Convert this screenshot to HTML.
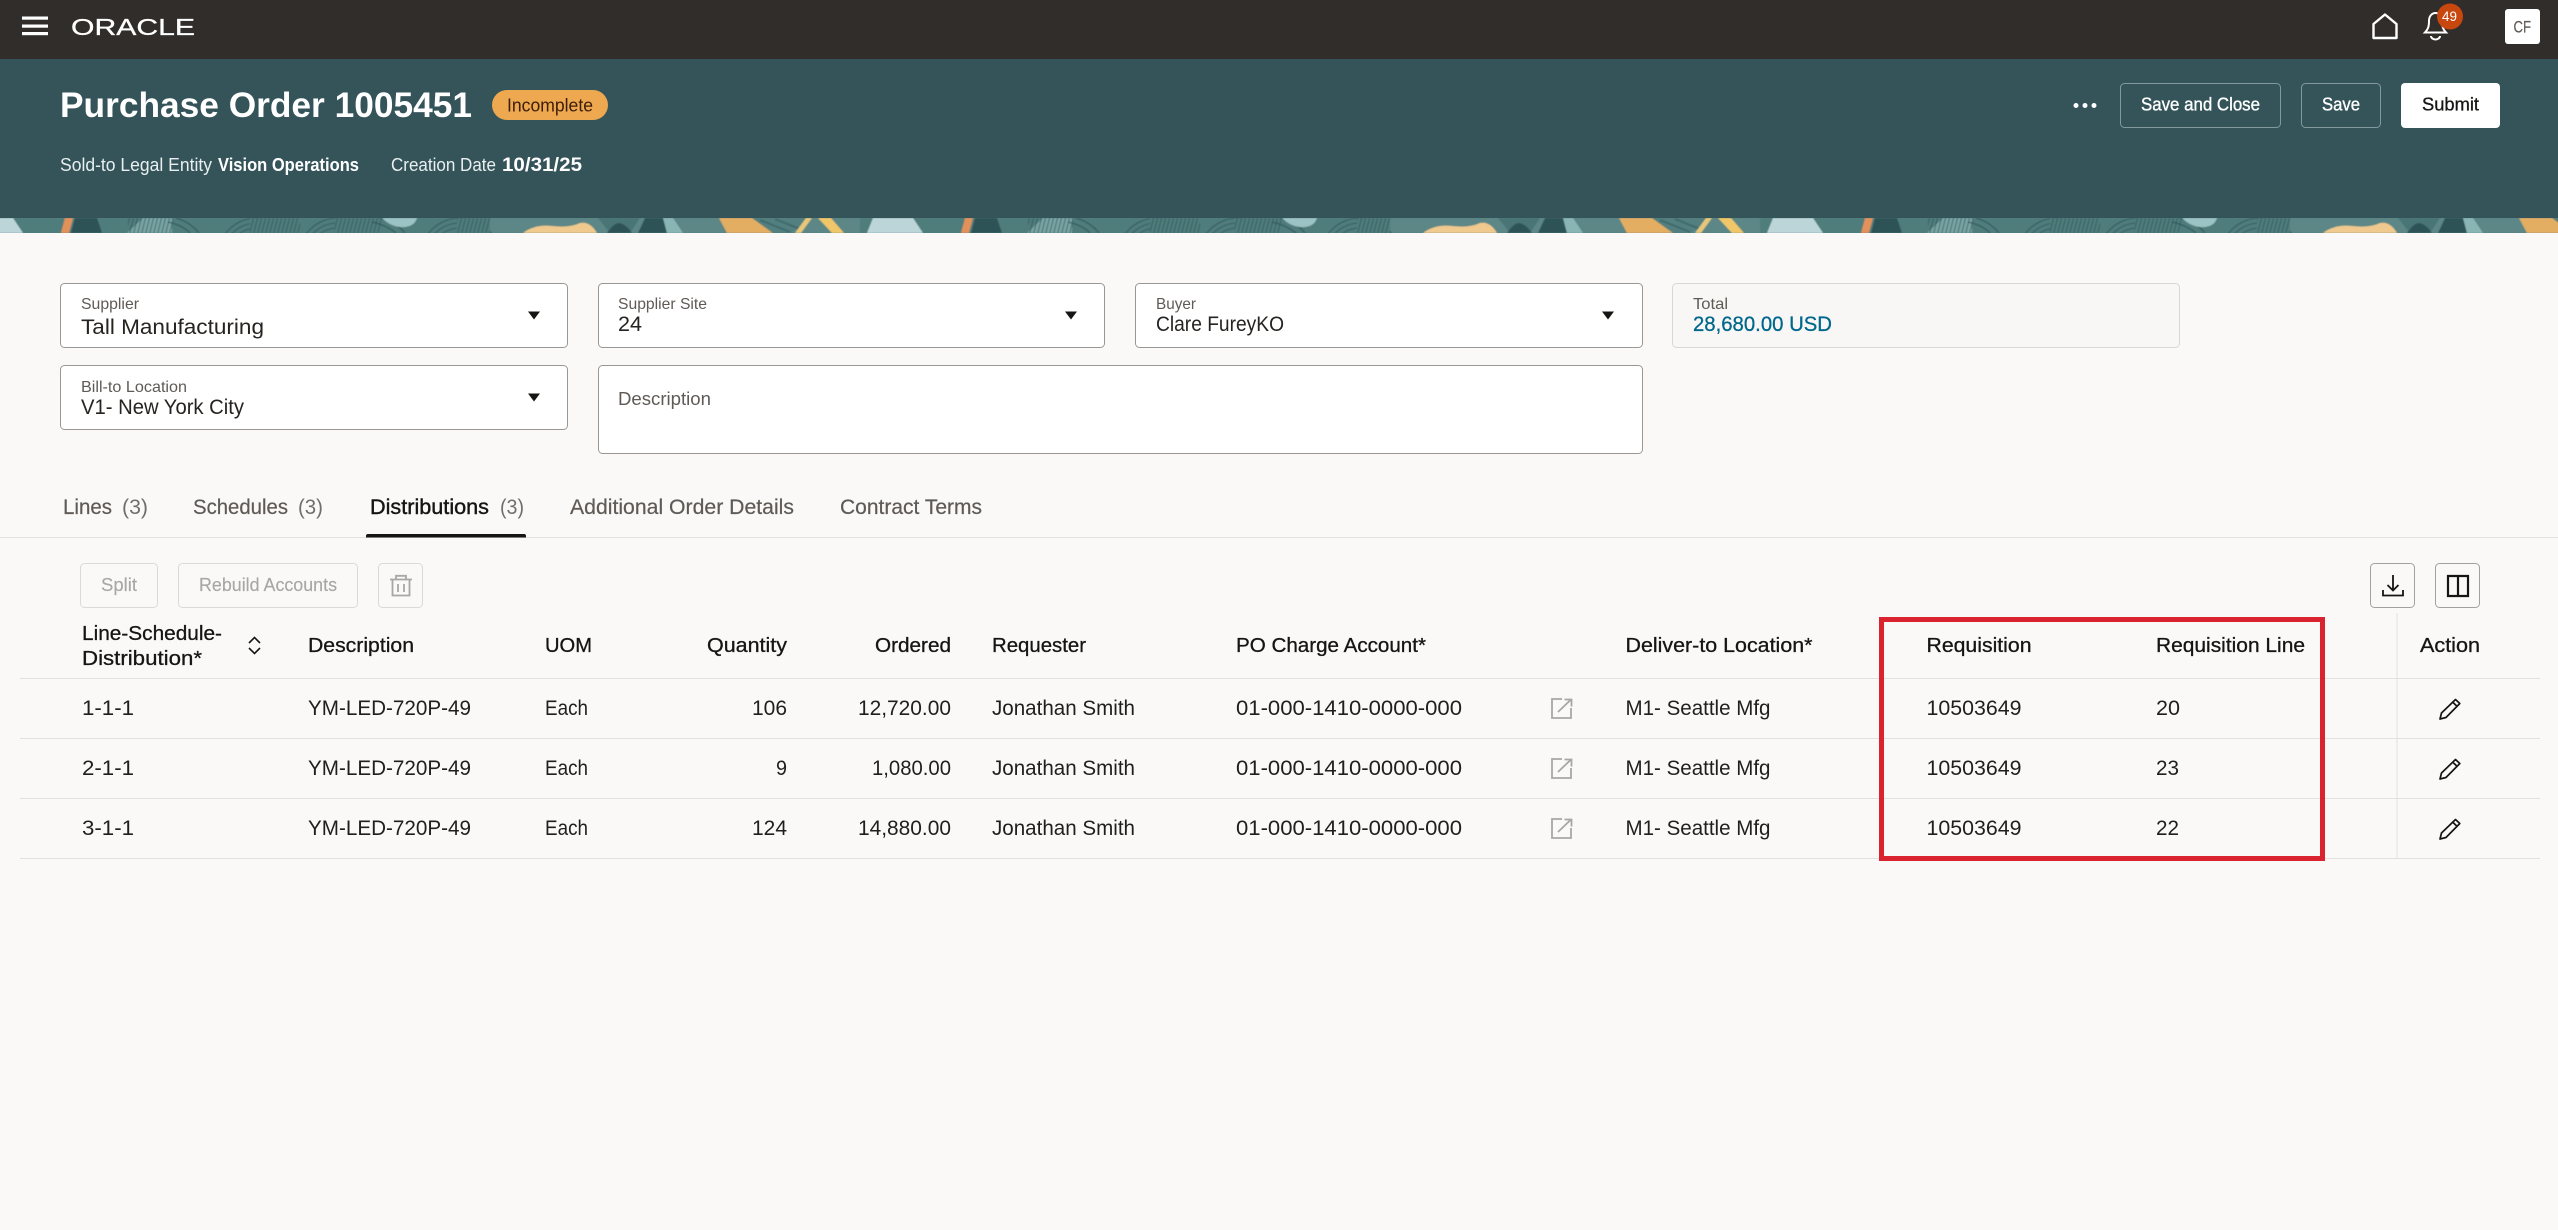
<!DOCTYPE html>
<html lang="en">
<head>
<meta charset="utf-8">
<title>Purchase Order 1005451</title>
<style>
html,body{margin:0;padding:0;background:#fbf9f8;width:2558px;height:1230px;overflow:hidden}
svg{display:block;font-family:"Liberation Sans",sans-serif}
text{white-space:pre}
.l{font-size:16px;fill:#5f5a56}
.v{font-size:21.5px;fill:#262320}
.t{font-size:21px;fill:#5f5a56;stroke:#5f5a56;stroke-width:.2}
.ta{font-size:21px;fill:#161513;stroke:#161513;stroke-width:.4}
.c{font-size:21px;fill:#726d69}
.h{font-size:20.5px;fill:#161513;stroke:#161513;stroke-width:.3}
.r{font-size:21px;fill:#211e1c}
.s{font-size:18.5px;fill:#e9efef}
.sb{font-size:18.5px;font-weight:bold;fill:#fff}
.sd{font-size:19.5px;font-weight:bold;fill:#fff}
.b{font-size:18.5px;fill:#fff;stroke:#fff;stroke-width:.35}
.d{font-size:18px;fill:#a9a6a3;stroke:#a9a6a3;stroke-width:.15}
.f{fill:#fff;stroke:#9a9693;stroke-width:1}
.div{stroke:#e3e1de;stroke-width:1}
.ic{fill:none;stroke:#a9a6a3;stroke-width:1.800}
.pk{fill:none;stroke:#161513;stroke-width:1.700;stroke-linejoin:round}
</style>
</head>
<body>
<svg xmlns="http://www.w3.org/2000/svg" width="2558" height="1230" viewBox="0 0 2558 1230">
<defs>
<filter id="soft" filterUnits="userSpaceOnUse" x="-10" y="210" width="2580" height="30"><feGaussianBlur stdDeviation=".4"/></filter>
<pattern id="hat" width="4" height="15" patternUnits="userSpaceOnUse" patternTransform="translate(0 218) skewX(-14)">
<line x1="1.500" y1="0" x2="1.500" y2="15" stroke="#2f5257" stroke-width="1" stroke-opacity=".75"/>
</pattern>
<clipPath id="bc"><rect x="0" y="218" width="2558" height="15"/></clipPath>
<g id="tile">
<rect x="490" y="218" width="370" height="15" fill="#5b8786"/>
<path d="M143 218H172V233H127Z" fill="#7aa5a4"/>
<rect x="128" y="218" width="45" height="15" fill="url(#hat)"/>
<path d="M176 218Q190 222 199 233M168 222Q182 225 190 233" fill="none" stroke="#2f5257" stroke-width="1.300" stroke-opacity=".8"/>
<g fill="none" stroke="#2f5257" stroke-width="1.100" stroke-opacity=".75">
<circle cx="257" cy="258" r="30"/><circle cx="257" cy="258" r="35"/><circle cx="257" cy="258" r="40"/>
<circle cx="338" cy="258" r="30"/><circle cx="338" cy="258" r="35"/><circle cx="338" cy="258" r="40"/>
<circle cx="460" cy="258" r="30"/><circle cx="460" cy="258" r="35"/><circle cx="460" cy="258" r="40"/>
</g>
<rect x="250" y="218" width="50" height="15" fill="#4f7d7c"/>
<rect x="250" y="218" width="50" height="15" fill="url(#hat)"/>
<rect x="335" y="218" width="46" height="15" fill="#4f7d7c"/>
<rect x="335" y="218" width="46" height="15" fill="url(#hat)"/>
<rect x="457" y="218" width="33" height="15" fill="#4f7d7c"/>
<rect x="457" y="218" width="33" height="15" fill="url(#hat)"/>
<path d="M380 218Q396 222 405 233M372 222Q386 225 396 233" fill="none" stroke="#2f5257" stroke-width="1.300" stroke-opacity=".8"/>
<path d="M382 218H417Q414 228 400 227Q390 226 382 218Z" fill="#9cc3c3"/>
<path d="M523 233Q535 224 552 226Q570 228 580 223Q590 221 597 233Z" fill="#f0c98e"/>
<path d="M598 218H640L630 233H610Z" fill="#4a7576"/>
<path d="M607 233Q614 223 619 223Q626 224 632 233Z" fill="#2f5257"/>
<path d="M645 218H663L667 233H638Z" fill="#2f5257"/>
<path d="M663 218H673L683 233H667Z" fill="#8ab5b5"/>
<path d="M719 218H752L773 233H727Z" fill="#e3ae62"/>
<path d="M752 218H812L790 233H773Z" fill="#527f7f"/>
<path d="M760 220L790 232M775 219L800 229" stroke="#3f6a6c" stroke-width="2" fill="none"/>
<path d="M806 218H812L801 233H795Z" fill="#e8c77a"/>
<path d="M818 218H831L844 233H832Z" fill="#efc769"/>
<path d="M873 218H913L923 233H867Z" fill="#bcd5d8"/>
<path d="M965 218H973L969 233H961Z" fill="#e2915a"/>
<path d="M975 218H997L1002 233H971Z" fill="#2f5257"/>
</g>
</defs>

<!-- top nav -->
<rect width="2558" height="59" fill="#312d2a"/>
<rect x="22" y="16.500" width="26" height="3.200" fill="#fff"/>
<rect x="22" y="24.500" width="26" height="3.200" fill="#fff"/>
<rect x="22" y="32" width="26" height="3.200" fill="#fff"/>
<text x="71" y="35" font-size="23" fill="#fff" stroke="#fff" stroke-width=".3" textLength="124" lengthAdjust="spacingAndGlyphs">ORACLE</text>

<path d="M2373.500 38V24L2385 14.500L2396.500 24V38Z" fill="none" stroke="#fff" stroke-width="2.400" stroke-linejoin="round"/>
<path d="M2425 32.500c3-3 4-6 4-11.500c0-5 3-8 6.500-8c3.500 0 6.500 3 6.500 8c0 5.500 1 8.500 4 11.500Z" fill="none" stroke="#fff" stroke-width="2"/>
<path d="M2431 36a4.500 3.500 0 0 0 9 0" fill="none" stroke="#fff" stroke-width="2"/>
<circle cx="2450" cy="16.500" r="13" fill="#c8470e"/>
<text x="2442" y="21" font-size="14" fill="#fff" textLength="15" lengthAdjust="spacingAndGlyphs">49</text>
<rect x="2505" y="9" width="35" height="35" rx="3" fill="#fff"/>
<text x="2513.500" y="32.500" font-size="16.500" fill="#5f5a56" stroke="#5f5a56" stroke-width=".2" textLength="17.500" lengthAdjust="spacingAndGlyphs">CF</text>

<!-- page header -->
<rect y="59" width="2558" height="159" fill="#34545a"/>
<text x="60" y="117" font-size="35.500" font-weight="bold" fill="#fff" textLength="412" lengthAdjust="spacingAndGlyphs">Purchase Order 1005451</text>
<rect x="492" y="90" width="116" height="30" rx="15" fill="#eda850"/>
<text x="507" y="111.500" font-size="18.500" fill="#3c1e08" textLength="86" lengthAdjust="spacingAndGlyphs">Incomplete</text>
<text class="s" x="60" y="171" textLength="152" lengthAdjust="spacingAndGlyphs">Sold-to Legal Entity</text>
<text class="sb" x="218" y="171" textLength="141" lengthAdjust="spacingAndGlyphs">Vision Operations</text>
<text class="s" x="391" y="171" textLength="105" lengthAdjust="spacingAndGlyphs">Creation Date</text>
<text class="sd" x="502" y="171" textLength="80" lengthAdjust="spacingAndGlyphs">10/31/25</text>

<circle cx="2076" cy="105.500" r="2.500" fill="#fff"/><circle cx="2085" cy="105.500" r="2.500" fill="#fff"/><circle cx="2094" cy="105.500" r="2.500" fill="#fff"/>
<rect x="2120.500" y="83.500" width="160" height="44" rx="4" fill="none" stroke="#83999c" stroke-width="1"/>
<text class="b" x="2141" y="110.500" textLength="119" lengthAdjust="spacingAndGlyphs">Save and Close</text>
<rect x="2301.500" y="83.500" width="79" height="44" rx="4" fill="none" stroke="#83999c" stroke-width="1"/>
<text class="b" x="2322" y="110.500" textLength="38" lengthAdjust="spacingAndGlyphs">Save</text>
<rect x="2401" y="83" width="99" height="45" rx="4" fill="#fff"/>
<text x="2422" y="110.500" font-size="18.500" fill="#161513" stroke="#161513" stroke-width=".3" textLength="57" lengthAdjust="spacingAndGlyphs">Submit</text>

<!-- banner -->
<g clip-path="url(#bc)">
<g filter="url(#soft)">
<rect x="-10" y="214" width="2580" height="24" fill="#4f7d7c"/>
<use href="#tile" x="-900"/>
<use href="#tile" x="0"/>
<use href="#tile" x="900"/>
<use href="#tile" x="1800"/>
<path d="M65 218H73L69 233H61Z" fill="#e2915a"/>
<path d="M75 218H97L102 233H71Z" fill="#2f5257"/>
</g>
</g>

<!-- form -->
<rect class="f" x="60.500" y="283.500" width="507" height="64" rx="4"/>
<text class="l" x="81" y="309" textLength="58" lengthAdjust="spacingAndGlyphs">Supplier</text>
<text class="v" x="81" y="334" textLength="183" lengthAdjust="spacingAndGlyphs">Tall Manufacturing</text>
<path d="M528 311.500H540L534 319.500Z" fill="#161513"/>

<rect class="f" x="598.500" y="283.500" width="506" height="64" rx="4"/>
<text class="l" x="618" y="309" textLength="89" lengthAdjust="spacingAndGlyphs">Supplier Site</text>
<text class="v" x="618" y="331" textLength="24" lengthAdjust="spacingAndGlyphs">24</text>
<path d="M1065 311.500H1077L1071 319.500Z" fill="#161513"/>

<rect class="f" x="1135.500" y="283.500" width="507" height="64" rx="4"/>
<text class="l" x="1156" y="309" textLength="40" lengthAdjust="spacingAndGlyphs">Buyer</text>
<text class="v" x="1156" y="331" textLength="128" lengthAdjust="spacingAndGlyphs">Clare FureyKO</text>
<path d="M1602 311.500H1614L1608 319.500Z" fill="#161513"/>

<rect x="1672.500" y="283.500" width="507" height="64" rx="4" fill="#f9f7f5" stroke="#d9d6d3" stroke-width="1"/>
<text class="l" x="1693" y="309" textLength="35" lengthAdjust="spacingAndGlyphs">Total</text>
<text x="1693" y="331" font-size="21" fill="#00688c" stroke="#00688c" stroke-width=".3" textLength="139" lengthAdjust="spacingAndGlyphs">28,680.00 USD</text>

<rect class="f" x="60.500" y="365.500" width="507" height="64" rx="4"/>
<text class="l" x="81" y="392" textLength="106" lengthAdjust="spacingAndGlyphs">Bill-to Location</text>
<text class="v" x="81" y="414" textLength="163" lengthAdjust="spacingAndGlyphs">V1- New York City</text>
<path d="M528 393.500H540L534 401.500Z" fill="#161513"/>

<rect class="f" x="598.500" y="365.500" width="1044" height="88" rx="4"/>
<text x="618" y="405" font-size="18" fill="#5f5a56" textLength="93" lengthAdjust="spacingAndGlyphs">Description</text>

<!-- tabs -->
<text class="t" x="63" y="514" textLength="49" lengthAdjust="spacingAndGlyphs">Lines</text>
<text class="c" x="122" y="514" textLength="26" lengthAdjust="spacingAndGlyphs">(3)</text>
<text class="t" x="193" y="514" textLength="95" lengthAdjust="spacingAndGlyphs">Schedules</text>
<text class="c" x="298" y="514" textLength="25" lengthAdjust="spacingAndGlyphs">(3)</text>
<text class="ta" x="370" y="514" textLength="119" lengthAdjust="spacingAndGlyphs">Distributions</text>
<text class="c" x="500" y="514" textLength="24" lengthAdjust="spacingAndGlyphs">(3)</text>
<text class="t" x="570" y="514" textLength="224" lengthAdjust="spacingAndGlyphs">Additional Order Details</text>
<text class="t" x="840" y="514" textLength="142" lengthAdjust="spacingAndGlyphs">Contract Terms</text>
<line class="div" x1="0" y1="537.500" x2="2558" y2="537.500"/>
<path d="M366 537.500V536Q366 534 368 534H524Q526 534 526 536V537.500Z" fill="#161513"/>

<!-- toolbar -->
<rect x="80.500" y="563.500" width="77" height="44" rx="4" fill="none" stroke="#dcd9d6" stroke-width="1"/>
<text class="d" x="101" y="591" textLength="36" lengthAdjust="spacingAndGlyphs">Split</text>
<rect x="178.500" y="563.500" width="179" height="44" rx="4" fill="none" stroke="#dcd9d6" stroke-width="1"/>
<text class="d" x="199" y="591" textLength="138" lengthAdjust="spacingAndGlyphs">Rebuild Accounts</text>
<rect x="378.500" y="563.500" width="44" height="44" rx="4" fill="none" stroke="#dcd9d6" stroke-width="1"/>
<path d="M390 579.500H412M396 579V575.800H406V579M392.500 580V595.500H409.500V580M398 584V592M404 584V592" fill="none" stroke="#a9a6a3" stroke-width="1.800"/>

<rect x="2370.500" y="563.500" width="44" height="44" rx="4" fill="none" stroke="#a3a09d" stroke-width="1"/>
<path d="M2393 575V590M2387.500 585L2393 590.500L2398.500 585M2383 590V595.500H2403V590" fill="none" stroke="#161513" stroke-width="1.800"/>
<rect x="2435.500" y="563.500" width="44" height="44" rx="4" fill="none" stroke="#a3a09d" stroke-width="1"/>
<path d="M2448 576H2468V596H2448ZM2458 576V596" fill="none" stroke="#161513" stroke-width="2.200"/>

<!-- table header -->
<text class="h" x="82" y="640" textLength="140" lengthAdjust="spacingAndGlyphs">Line-Schedule-</text>
<text class="h" x="82" y="665" textLength="120" lengthAdjust="spacingAndGlyphs">Distribution*</text>
<path d="M249 643L254.500 637.500L260 643M249 648L254.500 653.500L260 648" fill="none" stroke="#161513" stroke-width="1.600"/>
<text class="h" x="308" y="652" textLength="106" lengthAdjust="spacingAndGlyphs">Description</text>
<text class="h" x="545" y="652" textLength="47" lengthAdjust="spacingAndGlyphs">UOM</text>
<text class="h" x="707" y="652" textLength="80" lengthAdjust="spacingAndGlyphs">Quantity</text>
<text class="h" x="875" y="652" textLength="76" lengthAdjust="spacingAndGlyphs">Ordered</text>
<text class="h" x="992" y="652" textLength="94" lengthAdjust="spacingAndGlyphs">Requester</text>
<text class="h" x="1236" y="652" textLength="190" lengthAdjust="spacingAndGlyphs">PO Charge Account*</text>
<text class="h" x="1625.500" y="652" textLength="187" lengthAdjust="spacingAndGlyphs">Deliver-to Location*</text>
<text class="h" x="1926.500" y="652" textLength="105" lengthAdjust="spacingAndGlyphs">Requisition</text>
<text class="h" x="2156" y="652" textLength="149" lengthAdjust="spacingAndGlyphs">Requisition Line</text>
<text class="h" x="2420" y="652" textLength="60" lengthAdjust="spacingAndGlyphs">Action</text>

<line class="div" x1="20" y1="678.500" x2="2540" y2="678.500"/>
<line class="div" x1="20" y1="738.500" x2="2540" y2="738.500"/>
<line class="div" x1="20" y1="798.500" x2="2540" y2="798.500"/>
<line class="div" x1="20" y1="858.500" x2="2540" y2="858.500"/>
<line class="div" x1="2397" y1="613" x2="2397" y2="859" stroke-width="1.500"/>

<!-- row 1 -->
<text class="r" x="82" y="715" textLength="52" lengthAdjust="spacingAndGlyphs">1-1-1</text>
<text class="r" x="308" y="715" textLength="163" lengthAdjust="spacingAndGlyphs">YM-LED-720P-49</text>
<text class="r" x="545" y="715" textLength="43" lengthAdjust="spacingAndGlyphs">Each</text>
<text class="r" x="752" y="715" textLength="35" lengthAdjust="spacingAndGlyphs">106</text>
<text class="r" x="858" y="715" textLength="93" lengthAdjust="spacingAndGlyphs">12,720.00</text>
<text class="r" x="992" y="715" textLength="143" lengthAdjust="spacingAndGlyphs">Jonathan Smith</text>
<text class="r" x="1236" y="715" textLength="226" lengthAdjust="spacingAndGlyphs">01-000-1410-0000-000</text>
<path class="ic" d="M1562 699H1552V718H1571V708M1558 712L1571 699.500M1564.500 699.500H1571.500V706.500"/>
<text class="r" x="1625.500" y="715" textLength="145" lengthAdjust="spacingAndGlyphs">M1- Seattle Mfg</text>
<text class="r" x="1926.500" y="715" textLength="95" lengthAdjust="spacingAndGlyphs">10503649</text>
<text class="r" x="2156" y="715" textLength="24" lengthAdjust="spacingAndGlyphs">20</text>
<path class="pk" d="M2440 719L2441.500 713L2455.500 699.500L2459.800 703.500L2446 717.500ZM2452.800 702.200L2457 706.200"/>

<!-- row 2 -->
<text class="r" x="82" y="775" textLength="52" lengthAdjust="spacingAndGlyphs">2-1-1</text>
<text class="r" x="308" y="775" textLength="163" lengthAdjust="spacingAndGlyphs">YM-LED-720P-49</text>
<text class="r" x="545" y="775" textLength="43" lengthAdjust="spacingAndGlyphs">Each</text>
<text class="r" x="776" y="775" textLength="11" lengthAdjust="spacingAndGlyphs">9</text>
<text class="r" x="872" y="775" textLength="79" lengthAdjust="spacingAndGlyphs">1,080.00</text>
<text class="r" x="992" y="775" textLength="143" lengthAdjust="spacingAndGlyphs">Jonathan Smith</text>
<text class="r" x="1236" y="775" textLength="226" lengthAdjust="spacingAndGlyphs">01-000-1410-0000-000</text>
<path class="ic" d="M1562 759H1552V778H1571V768M1558 772L1571 759.500M1564.500 759.500H1571.500V766.500"/>
<text class="r" x="1625.500" y="775" textLength="145" lengthAdjust="spacingAndGlyphs">M1- Seattle Mfg</text>
<text class="r" x="1926.500" y="775" textLength="95" lengthAdjust="spacingAndGlyphs">10503649</text>
<text class="r" x="2156" y="775" textLength="23" lengthAdjust="spacingAndGlyphs">23</text>
<path class="pk" d="M2440 779L2441.500 773L2455.500 759.500L2459.800 763.500L2446 777.500ZM2452.800 762.200L2457 766.200"/>

<!-- row 3 -->
<text class="r" x="82" y="835" textLength="52" lengthAdjust="spacingAndGlyphs">3-1-1</text>
<text class="r" x="308" y="835" textLength="163" lengthAdjust="spacingAndGlyphs">YM-LED-720P-49</text>
<text class="r" x="545" y="835" textLength="43" lengthAdjust="spacingAndGlyphs">Each</text>
<text class="r" x="752" y="835" textLength="35" lengthAdjust="spacingAndGlyphs">124</text>
<text class="r" x="858" y="835" textLength="93" lengthAdjust="spacingAndGlyphs">14,880.00</text>
<text class="r" x="992" y="835" textLength="143" lengthAdjust="spacingAndGlyphs">Jonathan Smith</text>
<text class="r" x="1236" y="835" textLength="226" lengthAdjust="spacingAndGlyphs">01-000-1410-0000-000</text>
<path class="ic" d="M1562 819H1552V838H1571V828M1558 832L1571 819.500M1564.500 819.500H1571.500V826.500"/>
<text class="r" x="1625.500" y="835" textLength="145" lengthAdjust="spacingAndGlyphs">M1- Seattle Mfg</text>
<text class="r" x="1926.500" y="835" textLength="95" lengthAdjust="spacingAndGlyphs">10503649</text>
<text class="r" x="2156" y="835" textLength="23" lengthAdjust="spacingAndGlyphs">22</text>
<path class="pk" d="M2440 839L2441.500 833L2455.500 819.500L2459.800 823.500L2446 837.500ZM2452.800 822.200L2457 826.200"/>

<!-- highlight -->
<rect x="1881.500" y="619.500" width="441" height="239" fill="none" stroke="#d9232e" stroke-width="5"/>
</svg>
</body>
</html>
